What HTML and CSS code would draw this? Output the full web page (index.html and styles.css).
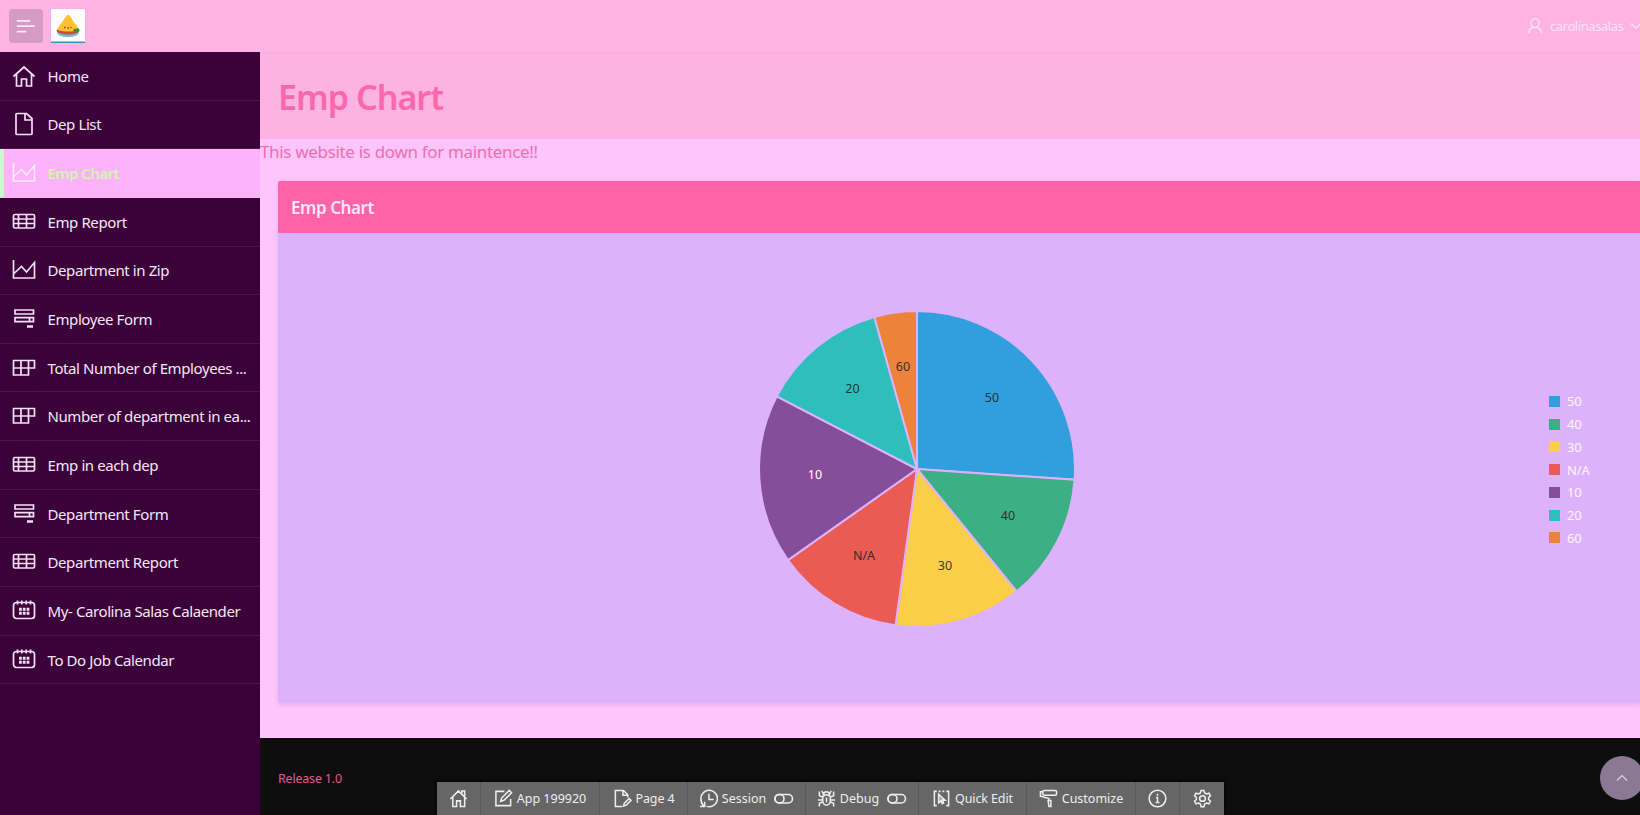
FILE: index.html
```html
<!DOCTYPE html>
<html lang="en">
<head>
<meta charset="utf-8">
<title>Emp Chart</title>
<link rel="stylesheet" href="styles.css">
</head>
<body>
<svg class="defs" width="0" height="0">
  <symbol id="home" viewBox="0 0 24 24"><path d="M1.5 12.5 12 3l10.500 9.500M4.500 10.500v11.500h5v-7h5v7h5V10.500"/></symbol>
  <symbol id="file" viewBox="0 0 24 24"><path d="M5 1.500h9.500l5.500 5v15q0 1-1 1H5q-1 0-1-1v-19q0-1 1-1zM13 1.500v6.500h6.500"/></symbol>
  <symbol id="area" viewBox="0 0 24 24"><path d="M1.500 2v18h21V4.500L14.500 14 9.500 8.500 2 15.500"/></symbol>
  <symbol id="table" viewBox="0 0 24 24"><rect x="1.500" y="4.500" width="21" height="13.500" rx="1.500"/><path d="M1.500 9h21M1.500 13.500h21M6.500 4.500v13.500M14.500 4.500v13.500"/></symbol>
  <symbol id="form" viewBox="0 0 24 24"><path d="M3 3h18.500v4H3zM3 10.700h18.500v4H3zM17.500 11v4M15 19h6M15 20h6"/></symbol>
  <symbol id="pivot" viewBox="0 0 24 24"><path d="M1.500 4.500h21v7.500H1.500zM1.500 12v7h15V4.500M9 4.500v14.500M1.500 19h15"/></symbol>
  <symbol id="cal" viewBox="0 0 24 24"><rect x="1.500" y="3.500" width="21" height="16" rx="3"/><path d="M5.500 1.500v4M9.800 1.500v4M14.200 1.500v4M18.500 1.500v4"/><path class="dots" d="M7 10.300h10.500M7 14.200h10.500"/></symbol>
</svg>
<header class="topbar">
  <button class="toggle"><svg viewBox="0 0 34 34"><path d="M8.500 11.800h12M8.500 17.200h16.500M8.500 22.700h8"/></svg></button>
  <svg class="logo" viewBox="0 0 34 34">
    <rect width="34" height="34" fill="#fff"/>
    <ellipse cx="17" cy="23.500" rx="11" ry="4.500" fill="#75b8d6"/>
    <ellipse cx="17" cy="21.500" rx="11.500" ry="4" fill="#c44f35"/>
    <path d="M6 20.500Q8 16 11.500 13 15 6 17.500 5.500q2 1 5 7.500Q26 16 28 20.500q-3 2-11 2t-11-2z" fill="#ffc233"/>
    <path d="M22 21.500q1-3 3-1.500 3-2 3.500 1.500-2 3-6.500 0z" fill="#438b35"/>
    <path d="M13 18.500h1.500M16.500 19h1.500M19.500 18.500h1" stroke="#7d4c28"/>
    <rect y="32.500" width="34" height="1.500" fill="#3d8fcb"/>
  </svg>
  <div class="user">
    <svg class="person" viewBox="0 0 16 18"><ellipse cx="8" cy="6" rx="4" ry="4.500"/><path d="M6.500 10.500Q2 11.500 1.500 16M9.500 10.500q4.500 1 5 5.500"/></svg>
    <span class="username">carolinasalas</span>
    <svg class="chev" viewBox="0 0 12 8"><path d="M1 1.500 6 6l5-4.500"/></svg>
  </div>
</header>
<div class="layout">
  <nav class="sidebar">
    <a class="item"><svg><use href="#home"/></svg><span>Home</span></a>
    <a class="item"><svg><use href="#file"/></svg><span>Dep List</span></a>
    <a class="item active"><svg><use href="#area"/></svg><span>Emp Chart</span></a>
    <a class="item"><svg><use href="#table"/></svg><span>Emp Report</span></a>
    <a class="item"><svg><use href="#area"/></svg><span>Department in Zip</span></a>
    <a class="item"><svg><use href="#form"/></svg><span>Employee Form</span></a>
    <a class="item"><svg><use href="#pivot"/></svg><span>Total Number of Employees ...</span></a>
    <a class="item"><svg><use href="#pivot"/></svg><span>Number of department in ea...</span></a>
    <a class="item"><svg><use href="#table"/></svg><span>Emp in each dep</span></a>
    <a class="item"><svg><use href="#form"/></svg><span>Department Form</span></a>
    <a class="item"><svg><use href="#table"/></svg><span>Department Report</span></a>
    <a class="item"><svg><use href="#cal"/></svg><span>My- Carolina Salas Calaender</span></a>
    <a class="item"><svg><use href="#cal"/></svg><span>To Do Job Calendar</span></a>
  </nav>
  <main class="main">
    <div class="title"><h1>Emp Chart</h1></div>
    <div class="body">
      <p class="notice"><span>This website is down for maintence!!</span></p>
      <section class="region">
        <h2><span>Emp Chart</span></h2>
        <div class="chart">
          <svg class="pie" viewBox="-158 -158 316 316" id="pie">
            <g class="slices" transform="scale(1.006)">
              <path fill="#319fdd" d="M0 0V-157A157 157 0 0 1 156.640 10.710z"/>
              <path fill="#3daf85" d="M0 0 156.640 10.710A157 157 0 0 1 99.050 121.810z"/>
              <path fill="#fbce4a" d="M0 0 99.050 121.810A157 157 0 0 1-21.370 155.540z"/>
              <path fill="#ea5b54" d="M0 0-21.370 155.540A157 157 0 0 1-128.260 90.540z"/>
              <path fill="#854e9b" d="M0 0-128.260 90.540A157 157 0 0 1-139.390-72.240z"/>
              <path fill="#2ebfbc" d="M0 0-139.390-72.240A157 157 0 0 1-42.360-151.180z"/>
              <path fill="#ec823c" d="M0 0-42.360-151.180A157 157 0 0 1 0-157z"/>
            </g>
            <g class="labels">
              <text x="75" y="-67">50</text><text x="91" y="51">40</text><text x="28" y="101">30</text><text x="-53" y="90.500">N/A</text><text class="light" x="-102" y="10">10</text><text x="-64.500" y="-76.500">20</text><text x="-14" y="-98">60</text>
            </g>
          </svg>
          <ul class="legend">
            <li class="c1">50</li><li class="c2">40</li><li class="c3">30</li><li class="c4">N/A</li><li class="c5">10</li><li class="c6">20</li><li class="c7">60</li>
          </ul>
        </div>
      </section>
    </div>
    <footer class="footer">Release 1.0</footer>
  </main>
</div>
<button class="up"><svg viewBox="0 0 12 8"><path d="M1 6.500 6 1.500l5 5"/></svg></button>
<div class="devbar">
  <a class="w1"><svg viewBox="0 0 20 20"><path d="M1.500 10.500 10 2l8.500 8.500M4 8.500V18.500h4v-6h4v6h4.500V8.500M13.500 5V2h3v6"/></svg></a>
  <a class="w2"><svg viewBox="0 0 20 20"><path d="M11 2.500H2v15h15.500v-7M7 13l1-3.500 8-8 2.500 2.500-8 8zM7 13l4-1.500"/></svg><span>App 199920</span></a>
  <a class="w3"><svg viewBox="0 0 20 20"><path d="M9.500 18.500H2.500v-17h8.500l4.500 4.500v3M10.500 1.500V6.500h5M11 18l1-3 5-5 2 2-5 5z"/></svg><span>Page 4</span></a>
  <a class="w4"><svg viewBox="0 0 20 20"><path d="M8 18.300A8.700 8.700 0 1 0 2 10Q2 15 5 18M1 18.500h5v-5M10.500 5v6h5"/></svg><span>Session</span><svg class="sw" viewBox="0 0 20 12"><rect x="1" y="1.500" width="17.500" height="8.500" rx="4.200"/><rect x="1" y="1.500" width="9" height="8.500" rx="4.200"/></svg></a>
  <a class="w5"><svg viewBox="0 0 20 20"><path d="M6 8Q10 4 14 8v5q-1 4-4 4t-4-4zM6.500 6.500Q7 3 10 3t3.500 3.500M10 9v5M6 8.500 2.500 7V2.500M14 8.500 17.500 7V2.500M1 11.500h5M14 11.500h5M6 13.500 2.500 15v3.500M14 13.500l3.500 1.500v3.500M6.500 4.500 5 2M13.500 4.500 15 2"/></svg><span>Debug</span><svg class="sw" viewBox="0 0 20 12"><rect x="1" y="1.500" width="17.500" height="8.500" rx="4.200"/><rect x="1" y="1.500" width="9" height="8.500" rx="4.200"/></svg></a>
  <a class="w6"><svg viewBox="0 0 20 20"><path d="M5 2.500H2.500v15H5M15 2.500h2.500v15H15M7 2.500h2M11 2.500h2"/><path fill="#e8e8e8" fill-opacity=".4" d="M7 5.500v9l2.300-2 1.500 3 1.500-.8-1.500-3h3z"/></svg><span>Quick Edit</span></a>
  <a class="w7"><svg viewBox="0 0 20 20"><rect x="4" y="1.500" width="14.500" height="5" rx="1.500"/><path d="M4 3H1.500v4.500l9 2.500v2M9 12h3.500v6.500H10.500L9.500 12"/></svg><span>Customize</span></a>
  <a class="w8"><svg viewBox="0 0 20 20"><circle cx="10" cy="10" r="8.800"/><path d="M8.500 9H10v5M8 14.300h4M10 5v2"/></svg></a>
  <a class="w9"><svg viewBox="0 0 20 20"><path d="M8.500 1.500h3l.7 2.700 2 1.100 2.600-.8 1.600 2.700-2 1.800v2l2 1.900-1.600 2.700-2.600-.8-2 1.100-.7 2.700h-3l-.7-2.700-2-1.100-2.600.8-1.600-2.700 2-1.900V9l-2-1.800 1.600-2.700 2.600.8 2-1.100z"/><circle cx="10" cy="10" r="3"/></svg></a>
</div>
</body>
</html>
```
FILE: styles.css
```css
* { box-sizing: border-box; }
body { margin: 0; width: 1640px; height: 815px; overflow: hidden; display: flex; flex-direction: column; position: relative; font-family: "Noto Sans", "Open Sans", sans-serif; background: #fdc5fb; }
button { border: 0; padding: 0; }
svg { fill: none; stroke: #fff; stroke-width: 1.5; flex: none; }
.defs { position: absolute; }

.topbar { height: 52px; flex: none; display: flex; align-items: center; gap: 8px; padding: 0 0 0 9px; background: #ffb3e4; }
.toggle { width: 34px; height: 34px; border-radius: 3px; background: #d69bc5; }
.toggle svg { display: block; width: 34px; height: 34px; stroke: #fbe6f5; stroke-width: 1.8; stroke-linecap: round; }
.logo { width: 34px; height: 34px; stroke: none; }
.user { display: flex; align-items: center; margin-left: auto; margin-right: -2px; color: #ffe3f6; font-size: 13px; }
.user svg { stroke: #ffe0f5; }
.person { width: 16px; height: 18px; margin-right: 7px; }
.username { letter-spacing: -0.420px; width: 80px; white-space: nowrap; }
.chev { width: 12px; height: 8px; }

.layout { flex: 1; display: flex; min-height: 0; }
.sidebar { width: 260px; flex: none; background: #3b0139; }
.item { display: flex; align-items: center; height: 48.650px; padding: 0 0 0 12px; gap: 11.500px; color: #f5e8f5; font-size: 15px; letter-spacing: -0.400px; white-space: nowrap; border-bottom: 1px solid #4b174a; }
.item svg { width: 24px; height: 24px; stroke: #f3e1f3; stroke-width: 1.700; }
.item .dots, .dots { stroke-width: 3; stroke-dasharray: 2.800 1; }
.active { background: #fcb3fb; color: #d3f5ae; font-weight: 600; border-left: 4px solid #c4fccb; padding-left: 8px; border-bottom-color: #fcb3fb; letter-spacing: -0.550px; }
.active svg { stroke: #ffe9fd; }

.main { flex: 1; min-width: 0; display: flex; flex-direction: column; }
.title { height: 87px; flex: none; padding: 0 18px; background: #fcb3e3; border-top: 1px solid #f8abdc; display: flex; align-items: center; }
h1 { margin: 0; padding-top: 1px; font-size: 34px; line-height: 46px; font-weight: 600; color: #fa67ab; letter-spacing: -0.950px; }
.body { height: 599px; flex: none; display: flex; flex-direction: column; }
.notice { margin: 0; height: 42px; line-height: 26px; font-size: 17px; color: #f06fae; letter-spacing: -0.330px; }
.region { margin-left: 18px; height: 522px; border-radius: 2px 0 0 2px; overflow: hidden; box-shadow: 0 2px 4px rgba(100, 0, 100, .12); }
h2 { margin: 0; height: 52px; padding-left: 13px; display: flex; align-items: center; background: #fe62a7; color: #ffe6f4; font-size: 17px; font-weight: 600; letter-spacing: -0.420px; }
.chart { height: 470px; background: #dcb2fd; display: flex; align-items: center; padding: 1px 0 0 481px; }
.pie { width: 316px; height: 316px; overflow: visible; }
.slices { stroke: #dcb2fd; stroke-width: 2; }
.labels { stroke: none; fill: #222; fill-opacity: .9; font-size: 12.500px; text-anchor: middle; }
.labels .light { fill: #fff; fill-opacity: 1; }
.legend { list-style: none; margin: 0 0 0 474px; padding: 2px 0 0; color: #fff4ff; font-size: 13px; letter-spacing: -0.100px; }
.legend li { display: flex; align-items: center; gap: 7px; height: 22.750px; }
.legend li::before { content: ""; width: 11px; height: 11px; background: currentColor; }
.c1::before { background: #319fdd !important; }
.c2::before { background: #3daf85 !important; }
.c3::before { background: #fbce4a !important; }
.c4::before { background: #ea5b54 !important; }
.c5::before { background: #854e9b !important; }
.c6::before { background: #2ebfbc !important; }
.c7::before { background: #ec823c !important; }
.footer { flex: 1; padding: 31px 18px; background: #0e0e0e; color: #e0579c; font-size: 12.500px; line-height: 20px; letter-spacing: -0.200px; }

.up { position: absolute; left: 1600px; top: 756px; width: 44px; height: 44px; border-radius: 50%; background: #8b7892; display: flex; align-items: center; justify-content: center; }
.up svg { width: 12px; height: 8px; stroke: #d3c5d5; }

.devbar { position: absolute; left: 437px; top: 782px; height: 33px; display: flex; background: #666; box-shadow: 0 0 6px #000; color: #eee; font-size: 12.500px; }
.devbar a { display: flex; align-items: center; justify-content: center; gap: 4px; border-right: 1px solid #595959; white-space: nowrap; }
.devbar svg { width: 19px; height: 19px; stroke: #eee; stroke-width: 1.600; }
.devbar .sw { width: 20px; height: 12px; margin-left: 4px; }
.w1 { width: 44px; } .w2 { width: 119px; } .w3 { width: 88px; } .w4 { width: 118px; }
.w5 { width: 113px; } .w6 { width: 108px; } .w7 { width: 109px; } .w8 { width: 44px; } .w9 { width: 44px; }
.devbar .w3, .devbar .w6 { letter-spacing: -0.120px; }
.devbar .w9 { border-right: 0; }
```
